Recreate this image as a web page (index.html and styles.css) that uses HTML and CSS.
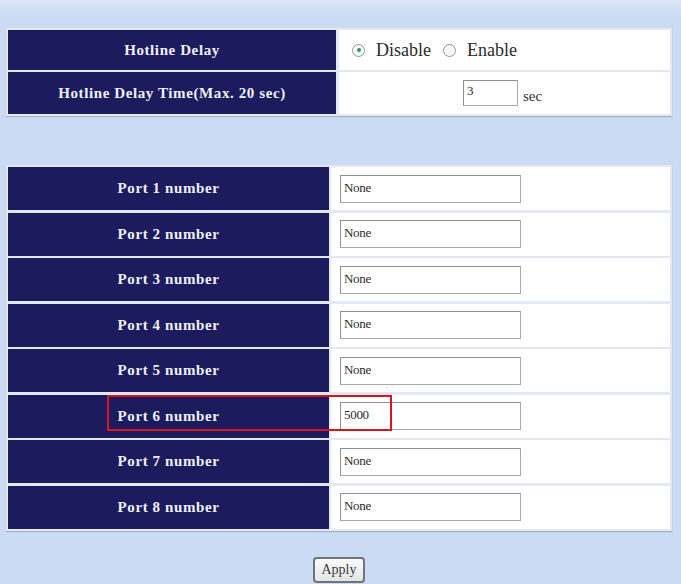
FILE: index.html
```html
<!DOCTYPE html>
<html>
<head>
<meta charset="utf-8">
<link rel="stylesheet" href="styles.css">
</head>
<body>
<div class="page">
  <div class="tbl tbl-a">
    <div class="lab r1">Hotline Delay</div>
    <div class="val r1 radios">
      <label class="opt"><span class="radio on"></span>Disable</label>
      <label class="opt"><span class="radio"></span>Enable</label>
    </div>
    <div class="lab r2">Hotline Delay Time(Max. 20 sec)</div>
    <div class="val r2 center">
      <span class="box small">3</span><span class="unit">sec</span>
    </div>
  </div>

  <div class="tbl tbl-b">
    <div class="lab">Port 1 number</div><div class="val"><span class="box">None</span></div>
    <div class="lab">Port 2 number</div><div class="val"><span class="box">None</span></div>
    <div class="lab">Port 3 number</div><div class="val"><span class="box">None</span></div>
    <div class="lab">Port 4 number</div><div class="val"><span class="box">None</span></div>
    <div class="lab">Port 5 number</div><div class="val"><span class="box">None</span></div>
    <div class="lab">Port 6 number</div><div class="val"><span class="box">5000</span></div>
    <div class="lab">Port 7 number</div><div class="val"><span class="box">None</span></div>
    <div class="lab">Port 8 number</div><div class="val"><span class="box">None</span></div>
  </div>

  <div class="actions"><span class="btn">Apply</span></div>
  <div class="highlight"></div>
</div>
</body>
</html>
```
FILE: styles.css
```css
html, body {
  margin: 0;
  padding: 0;
  background: #cbdbf4;
}
.page {
  position: relative;
  width: 681px;
  height: 584px;
  padding: 28px 0 0 6px;
  box-sizing: border-box;
  background: linear-gradient(#dbe6f7 0, #cbdbf4 14px);
  font-family: "Liberation Serif", "Times New Roman", serif;
}
.tbl {
  display: grid;
  width: 666px;
  box-sizing: border-box;
  padding: 2px;
  background: #e4e9f1;
  box-shadow: 0 1px 1px rgba(110, 125, 150, 0.45);
}
.tbl-a {
  grid-template-columns: 328px 331px;
  grid-template-rows: 40px 42px;
  gap: 2px 3px;
}
.tbl-b {
  margin-top: 49px;
  grid-template-columns: 321px 339px;
  grid-auto-rows: 43px;
  gap: 2.5px 2px;
}
.lab {
  background: #1b1b5d;
  color: #f0f0f6;
  font-weight: bold;
  font-size: 15px;
  letter-spacing: 0.6px;
  display: flex;
  align-items: center;
  justify-content: center;
}
.val {
  background: #ffffff;
  display: flex;
  align-items: center;
  padding-left: 9px;
}
.radios {
  padding-left: 13px;
  font-size: 18px;
  color: #2a2a2a;
  gap: 12px;
}
.opt {
  display: flex;
  align-items: center;
}
.radio {
  width: 13px;
  height: 13px;
  border: 1px solid #8a9aa8;
  border-radius: 50%;
  box-sizing: border-box;
  margin-right: 11px;
  background: #f6f8f8;
  position: relative;
}
.radio.on::after {
  content: "";
  position: absolute;
  left: 3.5px;
  top: 3.5px;
  width: 4px;
  height: 4px;
  border-radius: 50%;
  background: #3f8a5a;
}
.center {
  justify-content: center;
  padding-left: 0;
  padding-right: 4px;
}
.box {
  display: block;
  width: 181px;
  height: 28px;
  box-sizing: border-box;
  border: 1px solid #a9a9a9;
  border-top-color: #8f8f8f;
  border-left-color: #8f8f8f;
  background: #fff;
  font-size: 13px;
  color: #2b2b2b;
  padding: 4px 3px;
  letter-spacing: -0.3px;
}
.box.small {
  width: 55px;
  height: 26px;
  padding: 2px 3px;
}
.unit {
  font-size: 15px;
  color: #333;
  margin-left: 5px;
  align-self: flex-end;
  margin-bottom: 9px;
}
.actions {
  display: flex;
  justify-content: center;
  width: 666px;
  margin-top: 26px;
}
.btn {
  display: block;
  width: 52px;
  height: 26px;
  box-sizing: border-box;
  border: 2px solid #6f737a;
  border-radius: 4px;
  background: linear-gradient(#fbfbfb, #e4e4e4);
  font-size: 14px;
  color: #3a3a3a;
  text-align: center;
  line-height: 22px;
}
.highlight {
  position: absolute;
  left: 107px;
  top: 395px;
  width: 285px;
  height: 36px;
  box-sizing: border-box;
  border: 2px solid #d8141f;
}
```
